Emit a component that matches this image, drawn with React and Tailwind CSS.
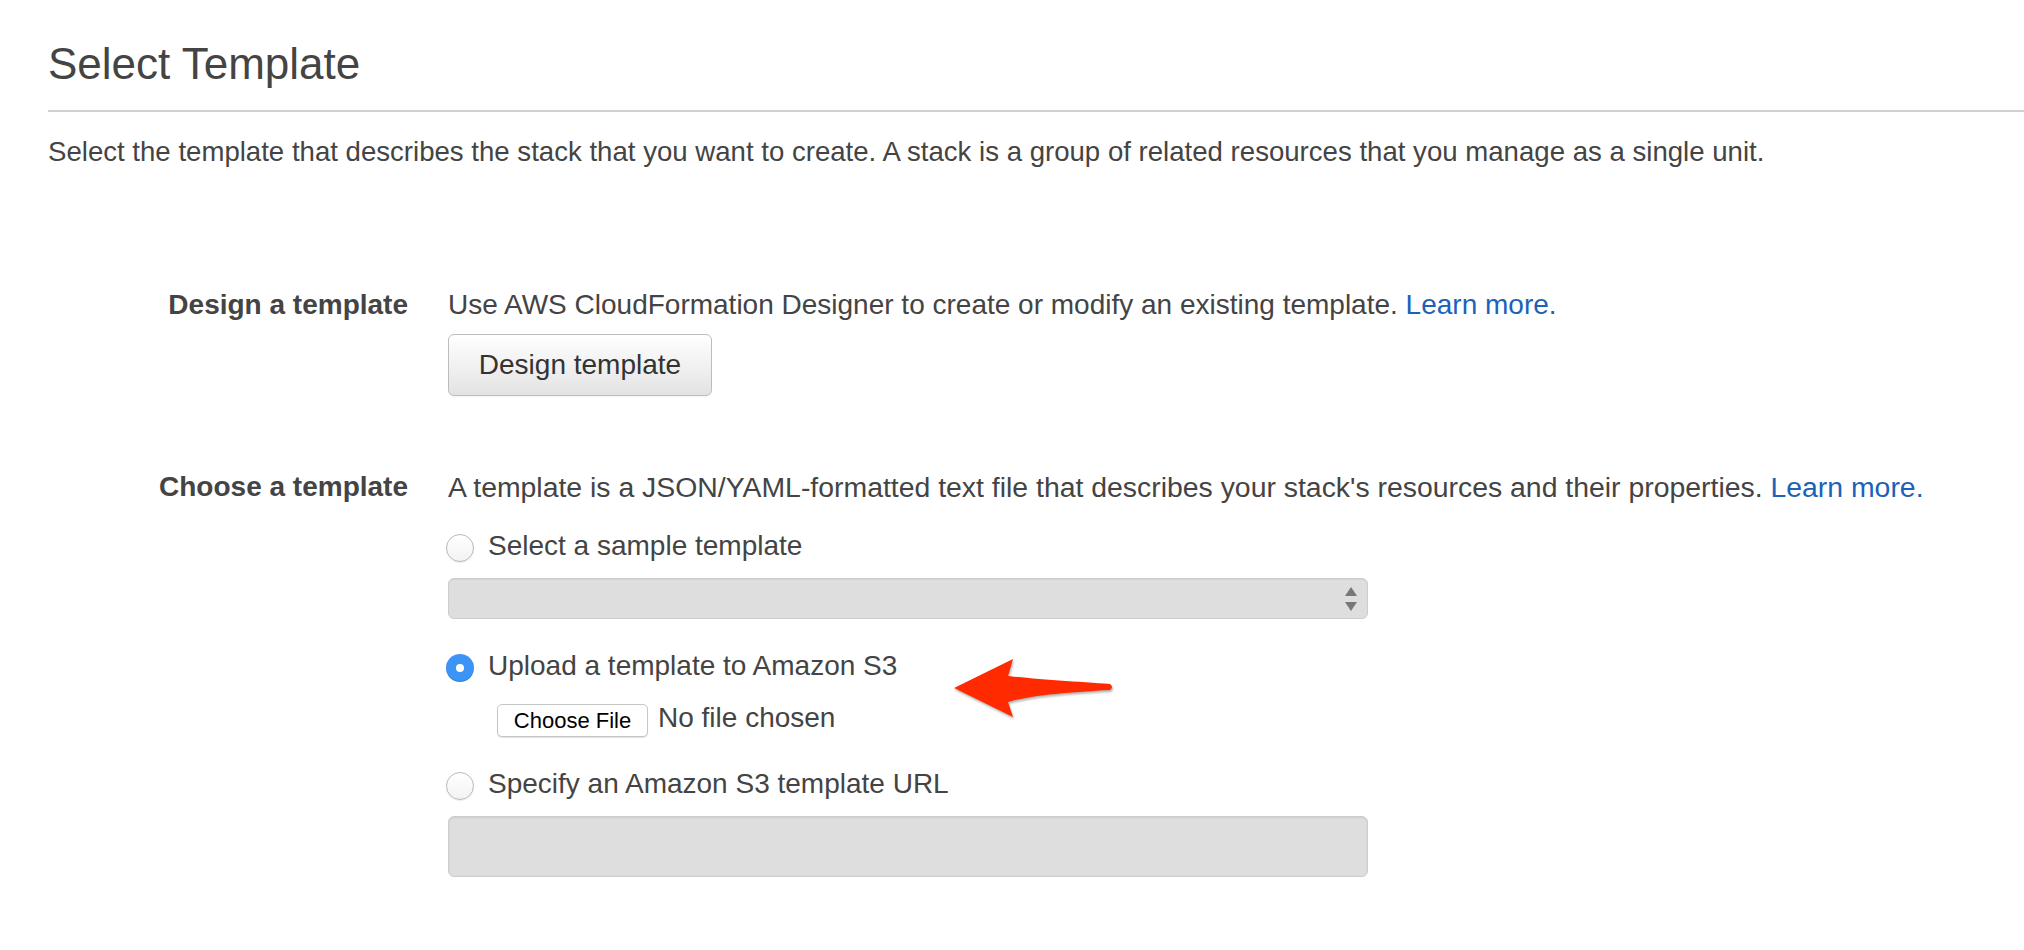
/** Select Template — CloudFormation stack template chooser */
const FONT = "font-['Liberation_Sans','Helvetica_Neue',Arial,sans-serif]";

function Radio({ checked = false }) {
  if (checked) {
    return (
      <span className="-ml-[2px] mt-[2px] flex h-7 w-7 shrink-0 items-center justify-center rounded-full bg-[#3c94f6] shadow-[inset_0_-1px_1px_rgba(0,0,0,0.12)]">
        <span className="h-2 w-2 rounded-full bg-white" />
      </span>
    );
  }
  return (
    <span className="-ml-[2px] mt-[2px] h-7 w-7 shrink-0 rounded-full border border-[#b9b9b9] bg-gradient-to-b from-white to-[#f3f3f3] shadow-[0_1px_1px_rgba(0,0,0,0.08)]" />
  );
}

function RadioRow({ checked, children }) {
  return (
    <label className="flex h-7 items-start gap-[14px]">
      <Radio checked={checked} />
      <span className="text-[28px] leading-[28px]">{children}</span>
    </label>
  );
}

function SelectArrows() {
  return (
    <svg width="12" height="24" viewBox="0 0 12 24" className="fill-[#777]">
      <path d="M6 0 L12 9 L0 9 Z" />
      <path d="M0 15 L12 15 L6 24 Z" />
    </svg>
  );
}

function RedArrow() {
  return (
    <svg
      width="200"
      height="80"
      viewBox="0 0 200 80"
      className="absolute left-[940px] top-[650px] drop-shadow-[1px_2px_1px_rgba(0,0,0,0.3)]"
    >
      <path
        d="M14 38 L73 9 L68 26 C92 29 140 32 170 34 Q174 37 170 40 C132 42 92 45 68 52 L73 67 Z"
        fill="#ff2a00"
      />
    </svg>
  );
}

export default function App() {
  return (
    <div className={`relative min-h-screen bg-white text-[#444] ${FONT}`}>
      <div className="pl-12">
        {/* Heading */}
        <h1 className="border-b-2 border-[#d0d0d0] pb-[24px] pt-[42px] text-[44px] font-normal leading-[44px]">
          Select Template
        </h1>
        <p className="mt-[26px] text-[27.6px] leading-[28px]">
          Select the template that describes the stack that you want to create. A stack is a group of related
          resources that you manage as a single unit.
        </p>

        {/* Design a template */}
        <div className="mt-[125px] grid grid-cols-[360px_1fr] gap-x-10">
          <div className="text-right text-[28px] font-bold leading-[28px]">Design a template</div>
          <div>
            <p className="text-[28px] leading-[28px]">
              Use AWS CloudFormation Designer to create or modify an existing template.{" "}
              <a className="text-[#1b62b8]">Learn more.</a>
            </p>
            <button className="mt-[15px] h-[62px] w-[264px] rounded-[6px] border border-[#bcbcbc] bg-gradient-to-b from-white to-[#e3e3e3] text-[28px] text-[#333] shadow-[0_1px_0_rgba(0,0,0,0.04)]">
              Design template
            </button>
          </div>
        </div>

        {/* Choose a template */}
        <div className="mt-[77px] grid grid-cols-[360px_1fr] gap-x-10">
          <div className="text-right text-[28px] font-bold leading-[28px]">Choose a template</div>
          <div>
            <p className="text-[28.4px] leading-[28px]">
              A template is a JSON/YAML-formatted text file that describes your stack's resources and their properties.{" "}
              <a className="text-[#1b62b8]">Learn more.</a>
            </p>

            <div className="mt-[31px]">
              <RadioRow>Select a sample template</RadioRow>
            </div>
            <div className="mt-[18px] flex h-[41px] w-[920px] items-center justify-end rounded-[6px] border border-[#cdcdcd] bg-[#dedede] pr-[10px] shadow-[inset_0_1px_1px_rgba(0,0,0,0.06)]">
              <SelectArrows />
            </div>

            <div className="mt-[33px]">
              <RadioRow checked>Upload a template to Amazon S3</RadioRow>
            </div>
            <div className="ml-[49px] mt-[24px] flex items-start gap-[10px]">
              <span className="flex h-[33px] w-[151px] items-center justify-center rounded-[5px] border border-[#c6c6c6] bg-white text-[22px] text-black shadow-[0_1px_1px_rgba(0,0,0,0.12)]">
                Choose File
              </span>
              <span className="text-[28px] leading-[28px]">No file chosen</span>
            </div>

            <div className="mt-[33px]">
              <RadioRow>Specify an Amazon S3 template URL</RadioRow>
            </div>
            <div className="mt-[18px] h-[61px] w-[920px] rounded-[6px] border border-[#cdcdcd] bg-[#dedede] shadow-[inset_0_1px_2px_rgba(0,0,0,0.08)]" />
          </div>
        </div>
      </div>

      <RedArrow />
    </div>
  );
}
